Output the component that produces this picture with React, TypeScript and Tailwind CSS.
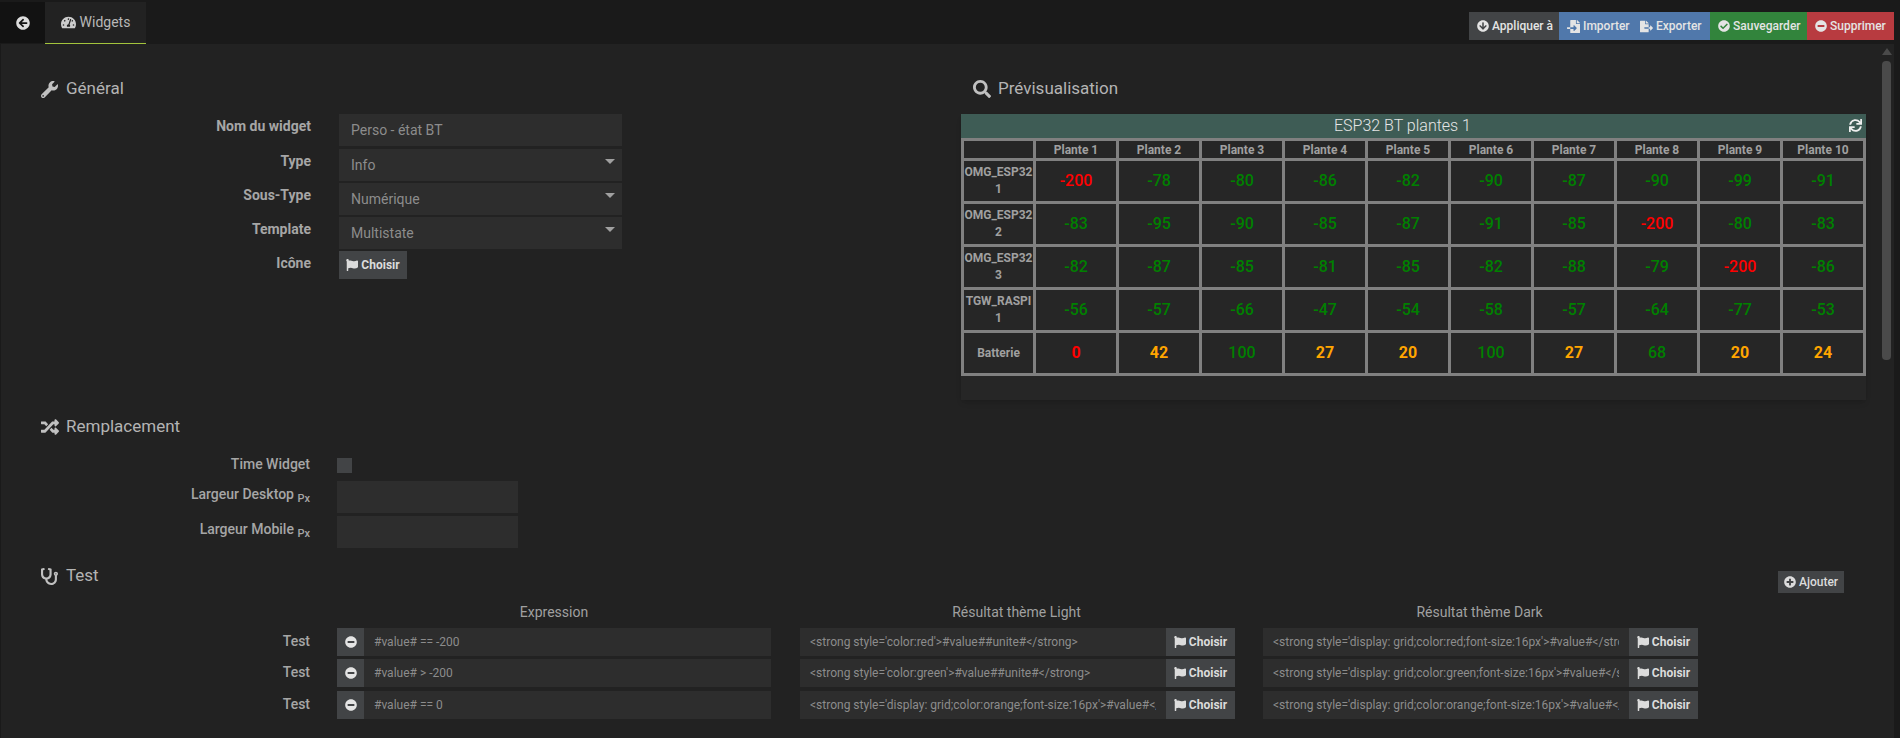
import { ReactNode } from "react";
import {
  FaArrowCircleDown,
  FaArrowCircleLeft,
  FaCheckCircle,
  FaFileExport,
  FaFileImport,
  FaFlag,
  FaMinusCircle,
  FaPlusCircle,
  FaRandom,
  FaSearch,
  FaStethoscope,
  FaSync,
  FaTachometerAlt,
  FaWrench,
} from "react-icons/fa";

const plantes = ["Plante 1", "Plante 2", "Plante 3", "Plante 4", "Plante 5", "Plante 6", "Plante 7", "Plante 8", "Plante 9", "Plante 10"];

const rows = [
  { name: "OMG_ESP32 1", values: [-200, -78, -80, -86, -82, -90, -87, -90, -99, -91] },
  { name: "OMG_ESP32 2", values: [-83, -95, -90, -85, -87, -91, -85, -200, -80, -83] },
  { name: "OMG_ESP32 3", values: [-82, -87, -85, -81, -85, -82, -88, -79, -200, -86] },
  { name: "TGW_RASPI 1", values: [-56, -57, -66, -47, -54, -58, -57, -64, -77, -53] },
];

const batterie = [0, 42, 100, 27, 20, 100, 27, 68, 20, 24];

const tests = [
  {
    expression: "#value# == -200",
    light: "<strong style='color:red'>#value##unite#</strong>",
    dark: "<strong style='display: grid;color:red;font-size:16px'>#value#</strong>",
  },
  {
    expression: "#value# > -200",
    light: "<strong style='color:green'>#value##unite#</strong>",
    dark: "<strong style='display: grid;color:green;font-size:16px'>#value#</strong>",
  },
  {
    expression: "#value# == 0",
    light: "<strong style='display: grid;color:orange;font-size:16px'>#value#</strong>",
    dark: "<strong style='display: grid;color:orange;font-size:16px'>#value#</strong>",
  },
];

function Heading({ icon, title }: { icon: ReactNode; title: string }) {
  return (
    <div className="flex items-center h-6 text-[17px] text-[#b4b4b4]">
      <span className="w-[25px] flex items-center">{icon}</span>
      {title}
    </div>
  );
}

function Label({ children, className = "" }: { children: ReactNode; className?: string }) {
  return (
    <div className={`w-[311px] shrink-0 pr-px text-right text-[14px] font-bold text-[#a6a6a6] ${className}`}>
      {children}
    </div>
  );
}

function Select({ value }: { value: string }) {
  return (
    <div className="relative w-[283px] h-8 bg-[#2d2d2d] pl-3 flex items-center text-[14px] text-[#8c8c8c]">
      {value}
      <span className="absolute right-[7px] top-[10px] border-x-[5px] border-t-[5px] border-x-transparent border-t-[#a0a0a0]" />
    </div>
  );
}

function ChoisirButton({ className }: { className: string }) {
  return (
    <button className={`bg-[#424446] h-7 flex items-center justify-center gap-[3px] text-[12px] font-bold text-[#dcdcdc] ${className}`}>
      <FaFlag className="text-[12px]" />
      Choisir
    </button>
  );
}

function ActionButton({ icon, label, className }: { icon: ReactNode; label: string; className: string }) {
  return (
    <button className={`h-7 flex items-center gap-[3px] whitespace-nowrap text-[12px] font-medium text-[#e4e4e4] ${className}`}>
      {icon}
      {label}
    </button>
  );
}

function ResultInput({ value }: { value: string }) {
  return (
    <div className="flex w-[435px] h-7">
      <input
        readOnly
        value={value}
        className="w-[366px] bg-[#2d2d2d] px-[10px] text-[12px] text-[#8c8c8c] outline-none"
      />
      <ChoisirButton className="w-[69px]" />
    </div>
  );
}

function cellColor(value: number) {
  return value === -200 ? "text-[#ff0000]" : "text-[#008000]";
}

function batterieColor(value: number) {
  if (value === 0) return "text-[#ff0000]";
  return value > 50 ? "text-[#008000] font-medium" : "text-[#ffa500]";
}

function Preview() {
  return (
    <div className="w-[905px] h-[286px] bg-[#262626] shadow-md">
      <div className="relative h-6 pr-[22px] bg-[#3e5c55] text-center text-[16px] leading-6 font-light text-[#e6e6e6]">
        ESP32 BT plantes 1
        <FaSync className="absolute right-[4px] top-[5px] text-[13px] text-[#eeeeee]" />
      </div>
      <table className="w-[902px] table-fixed border-collapse">
        <colgroup>
          <col className="w-[72px]" />
          {plantes.map((p) => (
            <col key={p} className="w-[83px]" />
          ))}
        </colgroup>
        <thead>
          <tr className="h-[20px]">
            <th className="border-[3px] border-[#808080]" />
            {plantes.map((p) => (
              <th key={p} className="border-[3px] border-[#808080] p-0 text-[12px] leading-4 font-bold text-[#a0a0a0]">
                {p}
              </th>
            ))}
          </tr>
        </thead>
        <tbody>
          {rows.map((row) => (
            <tr key={row.name} className="h-[43px]">
              <td className="border-[3px] border-[#808080] p-0 text-center text-[12px] leading-[17px] font-bold text-[#a0a0a0]">
                {row.name}
              </td>
              {row.values.map((value, i) => (
                <td key={i} className={`border-[3px] border-[#808080] p-0 text-center text-[16px] font-medium ${cellColor(value)}`}>
                  {value}
                </td>
              ))}
            </tr>
          ))}
          <tr className="h-[43px]">
            <td className="border-[3px] border-[#808080] p-0 text-center text-[12px] font-bold text-[#a0a0a0]">Batterie</td>
            {batterie.map((value, i) => (
              <td key={i} className={`border-[3px] border-[#808080] p-0 text-center text-[16px] font-bold ${batterieColor(value)}`}>
                {value}
              </td>
            ))}
          </tr>
        </tbody>
      </table>
    </div>
  );
}

export default function App() {
  return (
    <div className="h-[738px] w-[1900px] overflow-hidden bg-[#1a1a1a] font-['Roboto',sans-serif]">
      <div className="flex items-start h-[44px] pt-[2px] pr-[6px] bg-[#1a1a1a]">
        <div className="w-[45px] h-[41px] bg-[#121212] flex items-center justify-center text-[14px] text-[#dddddd]">
          <FaArrowCircleLeft />
        </div>
        <div className="w-[101px] h-[42px] bg-[#222222] border-b border-[#a3c43c] flex items-center justify-center gap-1 text-[14px] text-[#b8b8b8]">
          <FaTachometerAlt className="text-[15px] text-[#cccccc]" />
          Widgets
        </div>
        <div className="ml-auto mt-[10px] flex">
          <ActionButton
            icon={<FaArrowCircleDown className="text-[12px]" />}
            label="Appliquer à"
            className="w-[90px] pl-2 bg-[#424446]"
          />
          <div className="w-[151px] flex bg-[#5078ab]">
            <ActionButton icon={<FaFileImport className="text-[13px]" />} label="Importer" className="w-[75px] pl-2" />
            <ActionButton icon={<FaFileExport className="text-[13px]" />} label="Exporter" className="pl-[6px]" />
          </div>
          <ActionButton
            icon={<FaCheckCircle className="text-[12px]" />}
            label="Sauvegarder"
            className="w-[97px] pl-2 bg-[#32843c]"
          />
          <ActionButton
            icon={<FaMinusCircle className="text-[12px]" />}
            label="Supprimer"
            className="w-[87px] pl-2 bg-[#b83b40]"
          />
        </div>
      </div>

      <div className="flex w-[1893px] h-[694px] ml-px bg-[#222222]">
        <div className="w-[1881px] shrink-0">
          <div className="flex h-[371px]">
            <div className="w-[960px] pt-[33px]">
              <div className="pl-10">
                <Heading icon={<FaWrench className="text-[17px] text-[#c0c0c0]" />} title="Général" />
              </div>
              <div className="mt-[13px] flex flex-col gap-[2px]">
                <div className="flex gap-[27px]">
                  <Label className="pt-[2px]">Nom du widget</Label>
                  <input
                    readOnly
                    value="Perso - état BT"
                    className="w-[283px] h-8 bg-[#2d2d2d] px-3 text-[14px] text-[#8c8c8c] outline-none"
                  />
                </div>
                <div className="flex gap-[27px] mt-px">
                  <Label className="pt-[2px]">Type</Label>
                  <Select value="Info" />
                </div>
                <div className="flex gap-[27px]">
                  <Label className="pt-[2px]">Sous-Type</Label>
                  <Select value="Numérique" />
                </div>
                <div className="flex gap-[27px]">
                  <Label className="pt-[2px]">Template</Label>
                  <Select value="Multistate" />
                </div>
                <div className="flex gap-[27px] items-center">
                  <Label className="-mt-[3px]">Icône</Label>
                  <ChoisirButton className="w-[68px]" />
                </div>
              </div>
            </div>
            <div className="pt-[33px]">
              <div className="pl-3">
                <Heading icon={<FaSearch className="text-[18px] text-[#c0c0c0]" />} title="Prévisualisation" />
              </div>
              <div className="mt-[13px]">
                <Preview />
              </div>
            </div>
          </div>

          <div className="pl-10">
            <Heading icon={<FaRandom className="text-[18px] text-[#c0c0c0]" />} title="Remplacement" />
          </div>
          <div className="mt-[19px] flex items-center gap-[27px] h-[15px]">
            <div className="w-[309px] shrink-0 text-right text-[14px] font-medium text-[#a6a6a6] -mt-[2px]">Time Widget</div>
            <div className="w-[15px] h-[15px] bg-[#424446]" />
          </div>
          <div className="mt-2 flex flex-col gap-[3px]">
            {["Largeur Desktop", "Largeur Mobile"].map((label) => (
              <div key={label} className="flex gap-[27px]">
                <div className="w-[309px] shrink-0 text-right text-[14px] font-medium text-[#a6a6a6] pt-[3px]">
                  {label} <sub className="text-[11px]">Px</sub>
                </div>
                <div className="w-[181px] h-8 bg-[#2d2d2d]" />
              </div>
            ))}
          </div>

          <div className="mt-[16px] pl-10 pr-[38px] flex justify-between">
            <Heading icon={<FaStethoscope className="text-[17px] text-[#c0c0c0]" />} title="Test" />
            <button className="mt-[7px] w-[66px] h-[22px] bg-[#424446] flex items-center justify-center gap-[3px] text-[12px] font-medium text-[#dcdcdc]">
              <FaPlusCircle className="text-[12px]" />
              Ajouter
            </button>
          </div>

          <div className="mt-[9px] ml-[336px] flex gap-[28px] text-[14px] text-[#a0a0a0] text-center">
            <div className="w-[434px]">Expression</div>
            <div className="w-[435px]">Résultat thème Light</div>
            <div className="w-[435px]">Résultat thème Dark</div>
          </div>

          <div className="mt-[5px] flex flex-col gap-[3px]">
            {tests.map((test, i) => (
              <div key={test.expression} className={`flex items-center ${i === 2 ? "mt-px" : ""}`}>
                <div className="w-[309px] shrink-0 text-right text-[14px] font-medium text-[#a6a6a6] -mt-[2px]">Test</div>
                <div className="ml-[27px] flex gap-[29px]">
                  <div className="flex w-[434px] h-7">
                    <div className="w-[27px] bg-[#424446] flex items-center justify-center text-[12px] text-[#e4e4e4]">
                      <FaMinusCircle />
                    </div>
                    <input
                      readOnly
                      value={test.expression}
                      className="flex-1 bg-[#2d2d2d] px-[10px] text-[12px] text-[#8c8c8c] outline-none"
                    />
                  </div>
                  <div className="flex gap-[28px]">
                    <ResultInput value={test.light} />
                    <ResultInput value={test.dark} />
                  </div>
                </div>
              </div>
            ))}
          </div>
        </div>

        <div className="w-[9px] shrink-0 flex flex-col items-center pt-1">
          <span className="border-x-[5px] border-b-[7px] border-x-transparent border-b-[#4a4a4a]" />
          <div className="mt-[6px] w-[9px] h-[299px] rounded-[4px] bg-[#4a4a4a]" />
        </div>
      </div>
    </div>
  );
}
